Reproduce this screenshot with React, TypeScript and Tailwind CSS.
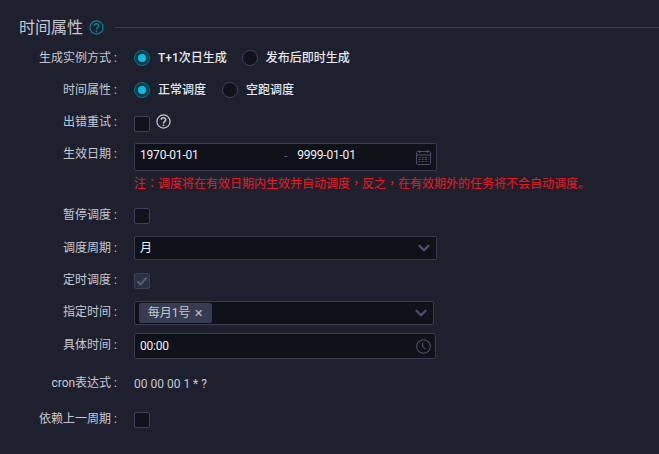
import type { ReactNode } from 'react';
import { ChevronDown } from 'lucide-react';

const FONT = 'font-["Roboto","Noto_Sans_CJK_SC",sans-serif]';

function Row({ label, className, labelClass, children }: { label: string; className: string; labelClass?: string; children: ReactNode }) {
  return (
    <div className={`flex items-start ${className}`}>
      <div className={`w-[117px] shrink-0 whitespace-nowrap text-right text-xs text-[#c4c8d2] ${labelClass ?? ''}`}>{label}&nbsp;:</div>
      <div className="ml-[17px] flex min-w-0 items-start">{children}</div>
    </div>
  );
}

function Radio({ checked, label, className }: { checked?: boolean; label: string; className?: string }) {
  return (
    <div className={`flex items-center ${className ?? ''}`}>
      <span
        className={`flex h-4 w-4 items-center justify-center rounded-full border ${
          checked ? 'border-[#00788f] bg-[#0d3a4a]' : 'border-[#3d4156] bg-[#10121c]'
        }`}
      >
        {checked && <span className="h-2 w-2 rounded-full bg-[#00c1de]" />}
      </span>
      <span className="ml-2 text-xs font-medium text-[#e6e8ee]">{label}</span>
    </div>
  );
}

function Checkbox({ checked, className }: { checked?: boolean; className: string }) {
  return (
    <span
      className={`flex h-4 w-4 items-center justify-center rounded-[2px] border border-[#3d4156] ${className} ${
        checked ? 'bg-[#2c3043]' : 'bg-[#10121c]'
      }`}
    >
      {checked && (
        <svg width="12" height="12" viewBox="0 0 12 12" fill="none" stroke="#5b6078" strokeWidth="2">
          <path d="M1.5 6.2 L4.6 9.4 L10.5 2.6" />
        </svg>
      )}
    </span>
  );
}

function HelpIcon({ color, size }: { color: string; size: number }) {
  return (
    <svg width={size} height={size} viewBox="0 0 16 16" fill="none" stroke={color} strokeWidth="1.3">
      <circle cx="8" cy="8" r="7" />
      <path d="M5.6 6.2 C5.6 3.4 10.4 3.4 10.4 6.2 C10.4 8 8 7.8 8 10" strokeWidth="1.6" />
      <circle cx="8" cy="12.1" r="1" fill={color} stroke="none" />
    </svg>
  );
}

function CalendarIcon() {
  return (
    <svg width="15" height="15" viewBox="0 0 15 15" fill="none" stroke="#4c5068" strokeWidth="1">
      <rect x="0.5" y="1.5" width="14" height="13" rx="1" />
      <path d="M0.5 5 H14.5 M3.5 0 V3 M11.5 0 V3" />
      <path d="M2.5 7.5 H12.5 M2.5 9.5 H12.5 M2.5 11.5 H12.5" strokeDasharray="2 1.2" />
    </svg>
  );
}

function ClockIcon() {
  return (
    <svg width="15" height="15" viewBox="0 0 15 15" fill="none" stroke="#4c5068" strokeWidth="1.1">
      <circle cx="7.5" cy="7.5" r="6.8" />
      <path d="M6.6 3.8 V7.6 L9.4 10" />
    </svg>
  );
}

export default function App() {
  return (
    <div className={`h-[454px] w-[659px] overflow-hidden bg-[#1e212d] ${FONT}`}>
      <div className="flex h-[50px] items-center pl-[19px] pt-[5px]">
        <span className="text-base leading-none text-[#c4c8d2]">时间属性</span>
        <span className="ml-[6px] flex">
          <HelpIcon color="#00849c" size={15} />
        </span>
        <div className="ml-[11px] mt-[-1px] h-px flex-1 bg-[#383c4e]" />
      </div>

      <Row label="生成实例方式" className="h-[16px]">
        <Radio checked label="T+1次日生成" className="mr-[15px]" />
        <Radio label="发布后即时生成" />
      </Row>
      <Row label="时间属性" className="mt-[16px] h-[16px]">
        <Radio checked label="正常调度" className="mr-[16px]" />
        <Radio label="空跑调度" />
      </Row>
      <Row label="出错重试" className="mt-[16px] h-[18px]">
        <Checkbox className="mt-[2px]" />
        <span className="ml-[6px] flex">
          <HelpIcon color="#c4c8d2" size={15} />
        </span>
      </Row>
      <Row label="生效日期" className="mt-[11px] h-[28px]" labelClass="mt-[3px]">
        <div className="flex h-[28px] w-[303px] items-center rounded-[2px] border border-[#383c4e] bg-[#10121a] pl-[5px] pr-[5px] text-xs tracking-[-0.2px] text-[#eef0f4]">
          <span className="mb-[5px] w-[144px]">1970-01-01</span>
          <span className="mb-[3px] text-[#5b6078]">-</span>
          <span className="mb-[5px] ml-[10px] flex-1">9999-01-01</span>
          <CalendarIcon />
        </div>
      </Row>
      <div className='ml-[134px] mt-[4px] h-[16px] whitespace-nowrap font-["Roboto","Noto_Sans_CJK_TC",sans-serif] text-xs leading-4 text-[#f0161e]'>
        注：调度将在有效日期内生效并自动调度，反之，在有效期外的任务将不会自动调度
        <span className='font-["Noto_Sans_CJK_SC",sans-serif]'>。</span>
      </div>
      <Row label="暂停调度" className="mt-[16px] h-[17px]">
        <Checkbox className="mt-[1px]" />
      </Row>
      <Row label="调度周期" className="mt-[12px] h-[24px]" labelClass="mt-[4px]">
        <div className="flex h-[24px] w-[303px] items-center justify-between rounded-[2px] border border-[#383c4e] bg-[#10121a] pl-[5px] pr-[3px] text-xs text-[#eef0f4]">
          <span>月</span>
          <ChevronDown size={18} strokeWidth={3} color="#4c5068" />
        </div>
      </Row>
      <Row label="定时调度" className="mt-[12px] h-[17px]">
        <Checkbox checked className="mt-[1px]" />
      </Row>
      <Row label="指定时间" className="mt-[12px] h-[24px]" labelClass="mt-[3px]">
        <div className="flex h-[24px] w-[300px] items-center justify-between rounded-[2px] border border-[#383c4e] bg-[#10121a] pl-[4px] pr-[3px]">
          <span className="flex h-[20px] w-[73px] items-center justify-center rounded-[2px] bg-[#383c50] text-xs text-[#c4c8d2]">
            每月1号
            <span className="ml-[4px] text-[11px] leading-none">✕</span>
          </span>
          <ChevronDown size={18} strokeWidth={3} color="#4c5068" />
        </div>
      </Row>
      <Row label="具体时间" className="mt-[8px] h-[26px]" labelClass="mt-[4px]">
        <div className="flex h-[26px] w-[302px] items-center justify-between rounded-[2px] border border-[#383c4e] bg-[#10121a] pl-[5px] pr-[4px] text-xs tracking-[-0.2px] text-[#eef0f4]">
          <span>00:00</span>
          <ClockIcon />
        </div>
      </Row>
      <Row label="cron表达式" className="mt-[16px] h-[17px]">
        <span className="mt-[1px] text-xs text-[#c4c8d2]">00 00 00 1 * ?</span>
      </Row>
      <Row label="依赖上一周期" className="mt-[19px] h-[17px]">
        <Checkbox className="mt-[1px]" />
      </Row>
    </div>
  );
}
